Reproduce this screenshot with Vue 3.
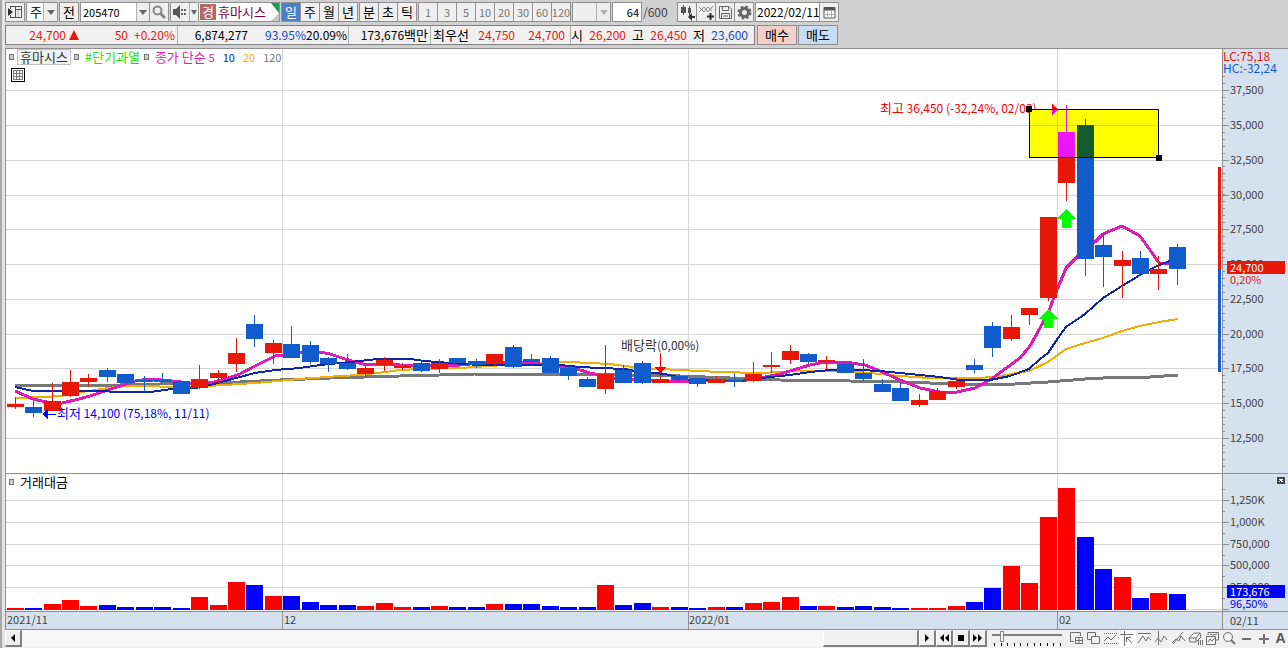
<script setup>
import { ref } from 'vue'

const code = ref('205470')
const count = ref('64')
const date = ref('2022/02/11')
const zoomLevel = ref(12)
const minutes = ['1', '3', '5', '10', '20', '30', '60', '120']
const periods = ['일', '주', '월', '년']
const intraday = ['분', '초', '틱']

/* [direction, high, body top, body bottom, low, volume top] */
const rows = [
  ['r', 397, 404, 407, 409, 608], ['b', 400, 407, 413, 417, 608], ['r', 383, 401, 411, 411, 604],
  ['r', 370, 382, 396, 397, 600], ['r', 374, 378, 382, 387, 606], ['b', 368, 370, 377, 382, 605],
  ['b', 374, 374, 383, 385, 607], ['b', 376, 380, 382, 392, 607], ['b', 373, 380, 382, 383, 607],
  ['b', 381, 381, 394, 394, 608], ['r', 365, 379, 388, 389, 597], ['r', 370, 373, 378, 383, 605],
  ['r', 338, 353, 364, 372, 582], ['b', 315, 324, 339, 347, 585], ['r', 340, 343, 353, 364, 596],
  ['b', 326, 344, 358, 358, 596], ['b', 341, 345, 362, 364, 602], ['b', 357, 358, 364, 372, 605],
  ['b', 354, 363, 369, 370, 605], ['r', 365, 368, 374, 378, 606], ['r', 357, 360, 365, 371, 603],
  ['r', 363, 366, 368, 370, 607], ['b', 361, 363, 371, 372, 607], ['r', 359, 363, 369, 373, 606],
  ['b', 358, 358, 363, 363, 607], ['b', 359, 361, 365, 368, 607], ['r', 354, 354, 364, 366, 604],
  ['b', 345, 347, 367, 368, 604], ['b', 354, 359, 362, 366, 604], ['b', 356, 358, 373, 373, 606],
  ['b', 368, 368, 376, 380, 607], ['b', 377, 379, 387, 387, 607], ['r', 345, 374, 389, 394, 585],
  ['b', 365, 370, 383, 383, 605], ['b', 361, 363, 383, 384, 603], ['r', 375, 379, 383, 383, 607],
  ['b', 375, 376, 380, 382, 607], ['b', 378, 378, 384, 387, 608], ['r', 376, 379, 383, 383, 607],
  ['b', 373, 380, 382, 387, 607], ['r', 362, 374, 381, 382, 603], ['r', 352, 365, 367, 373, 602],
  ['r', 345, 351, 360, 364, 597], ['b', 353, 354, 362, 364, 606], ['r', 356, 360, 362, 369, 606],
  ['b', 362, 364, 373, 373, 607], ['b', 359, 373, 379, 381, 606], ['b', 379, 384, 392, 392, 607],
  ['b', 383, 388, 401, 401, 608], ['r', 394, 400, 405, 407, 608], ['r', 388, 391, 400, 400, 608],
  ['r', 377, 381, 387, 389, 606], ['b', 359, 365, 370, 373, 602], ['b', 322, 326, 348, 357, 588],
  ['r', 315, 327, 339, 341, 566], ['r', 308, 308, 315, 325, 583], ['r', 217, 217, 298, 301, 517],
  ['r', 105, 132, 183, 201, 488], ['b', 119, 125, 259, 276, 537], ['b', 233, 245, 257, 287, 569],
  ['r', 251, 260, 266, 298, 577], ['b', 251, 258, 274, 274, 598], ['r', 256, 269, 274, 290, 593],
  ['b', 244, 247, 269, 285, 594]
]
const bars = rows.map(([dir, high, top, bottom, low, vol], i) => ({
  dir, high, top, bottom, low, vol, x: Math.floor(7.1 + 18.45 * i)
}))

const averages = [
  { name: 'ma120', points: '15,385 120,385 200,383 240,382 280,380 330,378 400,376 440,375 475,374 560,374 620,375 680,376 730,378 780,380 850,381 900,382 960,384 1015,384 1048,382 1085,379 1122,377 1150,377 1178,375' },
  { name: 'ma20', points: '15,398 45,397 60,396 75,393 95,390 115,387 130,386 190,387 225,385 255,383 300,379 340,376 360,375 385,372 400,370 420,369 460,368 490,366 530,363 570,362 610,364 640,368 680,370 720,372 760,373 800,371 840,371 870,373 900,376 930,378 980,378 1000,376 1029,371 1048,362 1066,349 1085,343 1103,338 1122,331 1140,326 1159,322 1178,319' },
  { name: 'ma5', points: '15,391 33,399 51,403 62,403 75,400 90,396 117,387 135,381 150,379 172,381 190,383 210,383 225,379 240,374 255,366 265,361 275,356 283,355 300,352 320,352 330,354 345,359 363,364 390,364 400,365 440,366 460,365 480,363 500,362 520,362 540,364 555,366 570,367 580,370 590,373 600,375 612,378 640,380 665,381 690,381 710,380 740,381 760,378 780,374 800,368 810,365 825,362 845,362 865,365 880,371 900,380 920,388 940,392 957,392 975,388 990,380 1005,369 1020,358 1030,346 1040,328 1048,313 1055,295 1066,268 1078,256 1096,241 1103,234 1122,226 1140,236 1150,250 1159,263 1168,264 1178,262' },
  { name: 'ma10', points: '15,387 33,391 100,391 117,392 150,392 172,389 195,388 210,385 225,381 240,377 255,373 275,370 300,368 320,365 340,363 360,361 378,359 410,359 425,361 450,363 480,365 520,365 560,365 580,367 600,368 625,369 640,372 665,374 690,380 740,381 770,377 790,375 810,372 830,370 860,370 880,371 910,374 940,377 960,380 990,380 1010,376 1029,369 1040,359 1048,353 1058,338 1066,327 1085,314 1103,298 1122,286 1140,275 1159,265 1178,258' }
]

const monthLines = [282, 688, 1057]
const priceTicks = [
  [90, '37,500'], [125, '35,000'], [160, '32,500'], [195, '30,000'], [229, '27,500'], [264, '25,000'],
  [299, '22,500'], [334, '20,000'], [368, '17,500'], [403, '15,000'], [438, '12,500']
]
const minorTicks = Array.from({ length: 58 }, (_, i) => 76 + Math.round(i * 6.96)).filter(y => y < 473)
const volumeTicks = [[500, '1,250K'], [522, '1,000K'], [544, '750,000'], [565, '500,000'], [587, '250,000'], [609, '']]
const volumeMinor = [489, 511, 533, 555, 576, 598]
const sliderTicks = Array.from({ length: 11 }, (_, i) => i)
</script>

<template>
  <main class="app">
    <header class="head">
      <div class="bar">
        <button class="cell only" aria-label="패널">
          <svg width="16" height="16" viewBox="0 0 16 16"><path d="M3 2.500H14.500V13.500H3M3.500 2V5M3.500 11V14M8.500 2V14M8.500 5.500H15" fill="none" stroke="#555" /><path d="M11 6V13" stroke="#bbb" /><path d="M1 4L6 8L1 12Z" fill="#333" /></svg>
        </button>
        <div class="combo kind">
          <select aria-label="종목 구분"><option>주</option></select>
          <span class="arrow"><i></i></span>
        </div>
        <button class="cell only">전</button>
        <div class="combo code">
          <input v-model="code" aria-label="종목코드" />
          <button class="arrow" aria-label="최근 종목"><i></i></button>
          <button class="cell" aria-label="검색">
            <svg width="16" height="16" viewBox="0 0 16 16"><circle cx="6.500" cy="6.500" r="4" fill="#eee" stroke="#888" stroke-width="2" /><path d="M9.500 9.500L14 14" stroke="#888" stroke-width="3" /></svg>
          </button>
        </div>
        <div class="combo sound">
          <button class="cell" aria-label="소리">
            <svg width="16" height="16" viewBox="0 0 16 16"><path d="M1 5H4L8 1V15L4 11H1Z" fill="#555" /><path d="M10 5V7M10 9V11M13 5V7M13 9V11" stroke="#666" stroke-width="2" /></svg>
          </button>
          <button class="arrow small" aria-label="소리 메뉴"><i></i></button>
        </div>
        <div class="name"><b>경</b><span>휴마시스</span><svg width="8" height="18" viewBox="0 0 8 18"><path d="M0 0H8V10Z" fill="#14a050" /><path d="M8 10V18H0Z" fill="#c8c8c8" /></svg></div>
        <div class="group">
          <button v-for="(p, i) in periods" :key="p" class="cell" :class="{ active: i === 0 }">{{ p }}</button>
        </div>
        <div class="group">
          <button v-for="p in intraday" :key="p" class="cell">{{ p }}</button>
        </div>
        <div class="group dim">
          <button v-for="m in minutes" :key="m" class="cell">{{ m }}</button>
        </div>
        <div class="combo off">
          <select aria-label="분 단위" disabled><option></option></select>
          <span class="arrow"><i></i></span>
        </div>
        <div class="combo count"><input v-model="count" aria-label="표시 개수" /></div>
        <span class="total">/600</span>
        <div class="group">
          <button class="cell" aria-label="차트 추가"><svg width="17" height="17" viewBox="0 0 17 17"><path d="M4.500 1V11M10.500 2V12" stroke="#555" /><path d="M2 3H7V9H2ZM9 4H12V9H9Z" fill="#555" /><path d="M9 13L13 9V12H16V14H13V17Z" fill="#333" /></svg></button>
          <button class="cell" aria-label="지표 추가"><svg width="17" height="17" viewBox="0 0 17 17"><path d="M1 8L6 3L10 8L15 2M1 3L6 8L10 3L14 7" fill="none" stroke="#888" /><path d="M12.500 9V16M9 12.500H16" stroke="#333" stroke-width="2" /></svg></button>
          <button class="cell" aria-label="저장"><svg width="17" height="17" viewBox="0 0 17 17"><path d="M2.500 2.500H12L14.500 5V14.500H2.500ZM5.500 3V6.500H11.500V3M4.500 14V9.500H12.500V14M6 12H11" fill="none" stroke="#666" /></svg></button>
          <button class="cell" aria-label="설정"><svg width="17" height="17" viewBox="0 0 17 17"><circle cx="8.500" cy="8.500" r="5.500" fill="none" stroke="#666" stroke-width="3" stroke-dasharray="2.500 1.820" /><circle cx="8.500" cy="8.500" r="4" fill="none" stroke="#666" stroke-width="3" /></svg></button>
        </div>
        <div class="combo date">
          <input v-model="date" aria-label="날짜" />
          <button class="cell" aria-label="달력"><svg width="13" height="13" viewBox="0 0 13 13"><path d="M1 1.500H12V12H1Z" fill="#fff" stroke="#555" /><path d="M1 3H12" stroke="#555" stroke-width="3" /><path d="M4.500 5V12M8.500 5V12M1 8.500H12" stroke="#aaa" /></svg></button>
        </div>
      </div>

      <div class="bar">
        <div class="quote">
          <div class="up w60">24,700</div>
          <div class="w14"><svg width="10" height="10" viewBox="0 0 10 10"><path d="M5 0L10 10H0Z" fill="#e81808" /></svg></div>
          <div class="up w48">50</div>
          <div class="up w50 line">+0.20%</div>
          <div class="w70">6,874,277</div>
          <div class="down w58">93.95%</div>
          <div class="w43 line">20.09%</div>
          <div class="w82 line">173,676<small>백만</small></div>
          <div class="w38"><small>최우선</small></div>
          <div class="up w46">24,750</div>
          <div class="up w50">24,700</div>
          <div class="w6 line"></div>
          <div class="w12"><small>시</small></div>
          <div class="up w43">26,200</div>
          <div class="w18"><small>고</small></div>
          <div class="up w43">26,450</div>
          <div class="w18"><small>저</small></div>
          <div class="down w43">23,600</div>
        </div>
        <button class="trade buy">매수</button>
        <button class="trade sell">매도</button>
      </div>
    </header>

    <section class="chart">
      <div class="panel price">
        <div class="plot">
          <svg class="canvas" width="100%" height="424" shape-rendering="crispEdges">
            <line v-for="[y] in priceTicks" :key="y" class="grid" x1="0" x2="100%" :y1="y - 48.5" :y2="y - 48.5" />
            <line v-for="x in monthLines" :key="x" class="grid" :x1="x - 5.5" :x2="x - 5.5" y1="0" y2="424" />
            <g transform="translate(-6 -49)">
              <polyline v-for="a in averages" :key="a.name" :class="a.name" :points="a.points" />
              <text class="note red-text" x="880" y="113"><tspan class="ko">최고</tspan> 36,450 (-32,24%, 02/03)</text>
              <rect x="1029.500" y="109.500" width="129" height="48" fill="#ffff00" />
              <path d="M1030 125.500H1158M1057.500 110V157" stroke="#e0d800" />
              <g v-for="b in bars" :key="b.x" :class="b.dir">
                <rect :x="b.x + 8" :y="b.high" width="1" :height="b.low - b.high" />
                <rect :x="b.x" :y="b.top" width="17" :height="b.bottom - b.top" />
              </g>
              <path d="M1058 132H1075V157H1058ZM1066 105H1067V132H1066Z" fill="#e818f8" />
              <path d="M1077 125H1094V157H1077ZM1085 119H1086V125H1085Z" fill="#145c30" />
              <path d="M1052 104L1058 109H1052Z" fill="#ff0000" />
              <path d="M1052 109H1058L1052 115Z" fill="#ff00ff" />
              <rect x="1029.500" y="109.500" width="129" height="48" fill="none" stroke="#000" />
              <path d="M1026 106H1032V112H1026ZM1156 155H1162V161H1156Z" fill="#000" />
              <path class="buy-mark" d="M1066.500 209L1076 219H1071V228H1062V219H1057Z" />
              <path class="buy-mark" d="M1048.500 309L1058 319H1053V328H1044V319H1039Z" />
              <text class="note gray-text" x="621" y="350"><tspan class="ko">배당락</tspan>(0,00%)</text>
              <path d="M660 353H661V367H666L660.500 374L655 367H660Z" fill="#ff0000" />
              <path d="M42 414L48 409V414H56V415H48V420Z" fill="#0000ff" />
              <text class="note blue-text" x="57" y="418"><tspan class="ko">최저</tspan> 14,100 (75,18%, 11/11)</text>
            </g>
            <svg x="100%" overflow="visible">
              <rect x="-4" y="118" width="3" height="102" fill="#e81808" />
              <rect x="-4" y="220" width="3" height="103" fill="#105ccc" />
            </svg>
          </svg>
          <div class="legend">
            <i></i><span class="tag">휴마시스</span><i></i><span class="green">#단기과열</span><i></i>
            <span class="magenta">종가 단순 <small>5</small></span><small class="navy">10</small><small class="gold">20</small><small class="gray">120</small>
          </div>
          <button class="grid-button" aria-label="데이터 표"><svg width="14" height="14" viewBox="0 0 14 14" shape-rendering="crispEdges"><path d="M.5.5H13.500V13.500H.5Z" fill="#fff" stroke="#000" /><path d="M2.500 2.500H11.500V11.500H2.500ZM5.500 3V11M8.500 3V11M3 5.500H11M3 8.500H11" fill="none" stroke="#777" /></svg></button>
        </div>
        <svg class="axis" width="65" height="424" shape-rendering="crispEdges">
          <g transform="translate(-1223 -49)">
            <text class="note lc" x="1223" y="61">LC:75,18</text>
            <text class="note hc" x="1223" y="73">HC:-32,24</text>
            <path v-for="y in minorTicks" :key="y" class="tick" :d="`M1223 ${y + 0.5}H1225`" />
            <g v-for="[y, label] in priceTicks" :key="y">
              <path class="tick" :d="`M1223 ${y + 0.5}H1229`" />
              <text class="label" x="1230" :y="y + 4">{{ label }}</text>
            </g>
            <rect x="1227" y="261" width="58" height="13" fill="#e81808" />
            <text class="white" x="1230" y="272">24,700</text>
            <text class="lc" x="1230" y="284">0,20%</text>
          </g>
        </svg>
      </div>

      <div class="panel volume">
        <div class="plot">
          <svg class="canvas" width="100%" height="137" shape-rendering="crispEdges">
            <line v-for="[y] in volumeTicks" :key="y" class="grid" x1="0" x2="100%" :y1="y - 473.5" :y2="y - 473.5" />
            <line v-for="x in monthLines" :key="x" class="grid" :x1="x - 5.5" :x2="x - 5.5" y1="0" y2="137" />
            <g transform="translate(-6 -474)">
              <rect v-for="b in bars" :key="b.x" :class="'v' + b.dir" :x="b.x" :y="b.vol" width="17" :height="610 - b.vol" />
            </g>
          </svg>
          <div class="legend"><i></i><span>거래대금</span></div>
        </div>
        <svg class="axis" width="65" height="137" shape-rendering="crispEdges">
          <g transform="translate(-1223 -474)">
            <path d="M1277 477H1285V484H1277Z" fill="#444" />
            <path d="M1279 479L1283 482M1283 479L1279 482" stroke="#fff" />
            <path v-for="y in volumeMinor" :key="y" class="tick" :d="`M1223 ${y + 0.5}H1225`" />
            <g v-for="[y, label] in volumeTicks" :key="y">
              <path class="tick" :d="`M1223 ${y + 0.5}H1229`" />
              <text v-if="label" class="label" x="1230" :y="y + 4">{{ label }}</text>
            </g>
            <rect x="1227" y="585" width="58" height="13" fill="#0000ff" />
            <text class="white" x="1230" y="596">173,676</text>
            <text class="vol-text" x="1230" y="608">96,50%</text>
          </g>
        </svg>
      </div>

      <div class="panel time">
        <svg class="canvas" width="100%" height="17" shape-rendering="crispEdges">
          <path d="M276.500 0V17M682.500 0V17M1051.500 0V17" stroke="#909090" />
          <text class="label" x="1" y="12">2021/11</text>
          <text class="label" x="278" y="12">12</text>
          <text class="label" x="683" y="12">2022/01</text>
          <text class="label" x="1053" y="12">02</text>
        </svg>
        <span class="now">02/11</span>
      </div>
    </section>

    <footer class="foot">
      <button class="push" aria-label="왼쪽"><svg width="8" height="8" viewBox="0 0 8 8"><path d="M6 0V8L2 4Z" /></svg></button>
      <div class="track"><div class="thumb"></div></div>
      <button class="push" aria-label="오른쪽"><svg width="8" height="8" viewBox="0 0 8 8"><path d="M2 0V8L6 4Z" /></svg></button>
      <button class="push" aria-label="뒤로"><svg width="10" height="8" viewBox="0 0 10 8"><path d="M5 0V8L1 4ZM10 0V8L6 4Z" /></svg></button>
      <button class="push" aria-label="정지"><svg width="8" height="8" viewBox="0 0 8 8"><path d="M1 1H7V7H1Z" /></svg></button>
      <button class="push" aria-label="앞으로"><svg width="10" height="8" viewBox="0 0 10 8"><path d="M0 0V8L4 4ZM5 0V8L9 4Z" /></svg></button>
      <div class="speed">
        <input v-model="zoomLevel" type="range" min="0" max="100" aria-label="속도" />
        <div class="marks"><i v-for="t in sliderTicks" :key="t"></i></div>
      </div>
      <div class="tools">
        <button aria-label="창 추가"><svg width="15" height="15" viewBox="0 0 15 15"><path d="M5 10.500H1.500V1.500H11.500V5" /><path d="M6.500 6.500H13.500V12.500H6.500ZM10 6V13M6 9.500H14" /></svg></button>
        <button aria-label="창 복사"><svg width="15" height="15" viewBox="0 0 15 15"><path d="M5 8.500H1.500V1.500H9.500V5M5.500 5.500H13.500V12.500H5.500Z" /></svg></button>
        <button aria-label="구간"><svg width="15" height="15" viewBox="0 0 15 15"><path d="M1 2.500H14M1 12.500H14" stroke-dasharray="1 1" /><path d="M1 10L5 6L8 9L13 4" /></svg></button>
        <button class="on" aria-label="십자선"><svg width="15" height="15" viewBox="0 0 15 15"><path d="M0 3.500H13M4.500 0V15M6 6L12 12M6.500 6V11M6 6.500H11" /></svg></button>
        <button aria-label="수평선"><svg width="15" height="15" viewBox="0 0 15 15"><path d="M1 2.500H14M1 12L6 5L9 10L11 6L14 9" /></svg></button>
        <button aria-label="수직선"><svg width="15" height="15" viewBox="0 0 15 15"><path d="M4.500 0V14M1 11L4 7L7 11L10 5L13 9" /></svg></button>
        <button aria-label="추세선"><svg width="15" height="15" viewBox="0 0 15 15"><path d="M2 13L12 1M1 12L5 8L8 10L10 5L14 10" /></svg></button>
        <button aria-label="지우개"><svg width="15" height="15" viewBox="0 0 15 15"><path d="M1 7L6 2H12L13 6L8 11H2ZM1 7H8L12 2M8 7V11M10.500 9V14M12.500 9V14M14.500 9V14" /></svg></button>
        <button aria-label="차트 비교"><svg width="15" height="15" viewBox="0 0 15 15"><path d="M3 4V1.500H13.500V9H11M1.500 5.500H10.500V13.500H1.500ZM3 11L5 8L7 10L10 7M5 3L8 4L12 3" /></svg></button>
        <button aria-label="돋보기"><svg width="15" height="15" viewBox="0 0 15 15"><circle cx="6" cy="6" r="4.500" /><path d="M9 9L13 13" stroke-width="2" /></svg></button>
        <button aria-label="축소"><svg width="15" height="15" viewBox="0 0 15 15"><path d="M3 8H12" stroke-width="2" /></svg></button>
        <button aria-label="확대"><svg width="15" height="15" viewBox="0 0 15 15"><path d="M3 8H13M8 3V13" stroke-width="2" /></svg></button>
        <button class="letter">A</button>
      </div>
    </footer>
  </main>
</template>

<style>
body { margin: 0; background: #d0d0d0; }
</style>

<style scoped>
.app { box-sizing: border-box; min-height: 100vh; padding-left: 5px; background: linear-gradient(90deg, #a8a8a8 2px, #e4e4e4 2px, #e4e4e4 5px, #d0d0d0 5px); font: 13px/18px "Noto Sans CJK KR", sans-serif; color: #000; }
button, input, select { box-sizing: border-box; margin: 0; padding: 0; border: 0; border-radius: 0; font: inherit; color: inherit; background: none; }
svg { display: block; }
.head { display: flex; flex-direction: column; gap: 3px; padding: 2px 0 3px; border-bottom: 1px solid #909090; }
.bar { display: flex; gap: 1px; height: 20px; }
.cell { display: flex; align-items: center; justify-content: center; width: 19px; height: 18px; background: #efefef; border-left: 1px solid #909090; flex: none; }
.only { width: 20px; height: 20px; border: 1px solid #909090; }
.group, .combo, .name { display: flex; box-sizing: border-box; height: 20px; border: 1px solid #909090; flex: none; }
.group .cell:first-child, .sound .cell { border-left: 0; width: 18px; }
.active { background: #4c80c4; color: #fff; }
.dim { color: #777; background: #efefef; font-size: 11px; }
.combo select { appearance: none; opacity: 1; }
.arrow { display: flex; align-items: center; justify-content: center; width: 13px; background: #efefef; border-left: 1px solid #b0b0b0; flex: none; }
.arrow i { width: 0; border: 4px solid transparent; border-top: 5px solid #666; border-bottom: 0; }
.arrow.small { width: 9px; }
.arrow.small i { border-width: 5px 3px 0; }
.kind { width: 32px; background: #fafafa; }
.kind select { width: 17px; padding-left: 3px; }
.code { width: 89px; background: #fff; }
.code input { width: 55px; padding-left: 2px; font-size: 11px; }
.sound { width: 27px; background: #efefef; }
.name { width: 82px; padding: 0 0 0 1px; background: #fff; color: #800040; gap: 2px; }
.name b { width: 16px; height: 16px; margin-top: 1px; line-height: 16px; text-align: center; background: #b46868; color: #fff; font-weight: 400; }
.name span { flex: 1; white-space: nowrap; }
.off { width: 39px; background: #efefef; }
.off select { width: 24px; }
.off .arrow i { border-top-color: #b0b0b0; }
.count { width: 30px; background: #fff; }
.count input { width: 28px; text-align: right; padding-right: 2px; font-size: 11px; }
.total { width: 33px; line-height: 20px; font-size: 12px; color: #444; }
.date { width: 84px; background: #fff; }
.date input { width: 63px; padding-left: 1px; font-size: 12px; }
.quote { display: flex; box-sizing: border-box; width: 750px; margin: 0 1px 0 0; border: 1px solid #808080; background: #f0f0f0; font-size: 12px; text-align: right; white-space: nowrap; }
.quote div { box-sizing: border-box; flex: none; }
.quote small { font-size: 13px; }
.quote svg { margin: 4px 0 0 3px; }
.line { border-right: 1px solid #b0b0b0; padding-right: 2px; }
.up { color: #e81808; }
.down { color: #1048cc; }
.w6 { width: 6px; } .w12 { width: 12px; } .w14 { width: 14px; } .w18 { width: 18px; } .w38 { width: 38px; }
.w43 { width: 43px; } .w46 { width: 46px; } .w48 { width: 48px; } .w50 { width: 50px; } .w58 { width: 58px; }
.w60 { width: 60px; } .w70 { width: 70px; } .w82 { width: 82px; }
.trade { width: 40px; border: 1px solid #909090; }
.buy { background: #f4d0cc; }
.sell { background: #c8dcf4; }
.chart { border-left: 1px solid #909090; background: #fff; }
.panel { display: flex; border-bottom: 1px solid #909090; }
.plot { position: relative; flex: 1; min-width: 0; }
.canvas { overflow: hidden; }
.axis { flex: none; overflow: visible; background: #d6e1ef; border-left: 1px solid #909090; }
text { font-size: 11px; }
.note { font-size: 12px; }
.ko { font-size: 13px; }
.grid { stroke: #d6d6d6; }
.tick { stroke: #909090; }
.r { fill: #e81808; } .b { fill: #105ccc; }
.vr { fill: #ff0000; } .vb { fill: #0000ff; }
polyline { fill: none; stroke-width: 2; }
.ma5 { stroke: #dc1cb4; stroke-width: 3; }
.ma10 { stroke: #0c28a8; }
.ma20 { stroke: #f0ac08; }
.ma120 { stroke: #787878; stroke-width: 3; }
.buy-mark { fill: #00ff00; }
.red-text { fill: #ff0000; } .blue-text, .vol-text { fill: #0000ff; } .gray-text { fill: #333; }
.label { fill: #444; } .white { fill: #fff; } .lc { fill: #e81808; } .hc { fill: #105ccc; }
.legend { position: absolute; left: 3px; top: 0; display: flex; align-items: center; height: 16px; white-space: nowrap; }
.legend i { box-sizing: border-box; width: 5px; height: 6px; margin-right: 6px; border: 1px solid #777; background: #ccc; }
.legend small { font-size: 11px; }
.tag { box-sizing: border-box; height: 16px; margin: 0 3px 0 -3px; padding: 0 2px; line-height: 14px; border: 1px solid #c0c0c0; background: #f0f0f0; color: #333; }
.green { color: #00f000; margin-right: 4px; }
.magenta { color: #dc1cb4; } .navy { color: #0c28a8; } .gold { color: #f0ac08; } .gray { color: #777; }
.navy, .gold, .gray { margin-left: 8px; }
.grid-button { position: absolute; left: 5px; top: 19px; }
.time { height: 17px; background: #d6e1ef; }
.time .canvas { flex: 1; overflow: visible; }
.now { box-sizing: border-box; width: 66px; flex: none; padding-left: 7px; line-height: 16px; border-left: 1px solid #909090; color: #444; font-size: 11px; }
.foot { display: flex; height: 18px; background: #f0f0f0; }
.push { display: flex; align-items: center; justify-content: center; width: 17px; height: 17px; border: 1px solid #fff; border-right: 2px solid #808080; border-bottom: 2px solid #808080; background: #f0f0f0; flex: none; }
.track { display: flex; justify-content: flex-end; flex: 1; height: 17px; background: repeating-conic-gradient(#f0f0f0 0 25%, #fff 0 50%) 0 0 / 2px 2px; }
.thumb { box-sizing: border-box; width: 96px; border: 1px solid #fff; border-right: 2px solid #808080; border-bottom: 2px solid #808080; background: #f0f0f0; }
.speed { width: 70px; margin: 0 6px 0 5px; }
.speed input { display: block; appearance: none; width: 70px; height: 13px; background: linear-gradient(#808080, #808080) 0 4px / 100% 2px no-repeat; }
.speed input::-webkit-slider-thumb { appearance: none; box-sizing: border-box; width: 4px; height: 11px; border: 1px solid #888; background: #eee; }
.marks { display: flex; justify-content: space-between; padding: 0 1px 0 2px; }
.marks i { width: 1px; height: 3px; background: #000; }
.tools { display: flex; width: 220px; flex: none; }
.tools button { display: flex; align-items: center; justify-content: center; width: 17px; height: 17px; flex: none; }
.tools svg { fill: none; stroke: #707070; }
.tools .on { background: #fff; }
.tools .letter { font: bold 14px/17px "Liberation Sans", sans-serif; color: #555; }
</style>
